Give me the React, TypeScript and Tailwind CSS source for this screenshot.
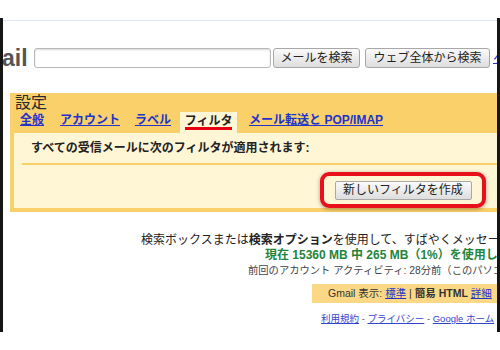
import React from "react";

export default function App() {
  return (
    <div className="w-[500px] h-[350px] bg-white overflow-hidden font-['Liberation_Sans','Noto_Sans_CJK_JP',sans-serif] text-[#222]">
      <div className="pt-[18px]">
        <div className="h-[314px] border-l-[3px] border-r-[3px] border-[#151515] overflow-hidden">
          <div className="mt-[2px] border-t border-[#dfe6f5]" />
          {/* search row */}
          <div className="mt-[27px] flex items-center h-[20px] whitespace-nowrap">
            <span className="shrink-0 text-[23px] font-bold text-[#555] leading-none w-[32px] -ml-[1px]">ail</span>
            <div className="shrink-0 w-[237px] h-[20px] border border-[#b8b8b8] rounded-[3px] shadow-[inset_0_1px_2px_rgba(0,0,0,0.15)] bg-white" />
            <button className="shrink-0 ml-[2px] w-[87px] h-[20px] border border-[#a8a8a8] rounded-[3px] bg-gradient-to-b from-[#fafafa] to-[#dedede] text-[12px] leading-none text-[#222]">
              メールを検索
            </button>
            <button className="shrink-0 ml-[5px] w-[125px] h-[20px] border border-[#a8a8a8] rounded-[3px] bg-gradient-to-b from-[#fafafa] to-[#dedede] text-[12px] leading-none text-[#222]">
              ウェブ全体から検索
            </button>
            <span className="shrink-0 ml-[3px] text-[13px] text-[#2233cc] underline">ヘ</span>
          </div>
          {/* settings box */}
          <div className="mt-[25px] ml-[7px] w-[520px] h-[119px] bg-[#f9d06a] flex flex-col">
            <div className="pl-[5px] pt-[1px] h-[19px] text-[16px] leading-[18px] text-[#2a2a2a]">設定</div>
            <div className="flex items-end h-[21px] text-[12px] font-bold whitespace-nowrap">
              <span className="ml-[10px] mb-[4px] text-[#2233cc] underline">全般</span>
              <span className="ml-[16px] mb-[4px] text-[#2233cc] underline">アカウント</span>
              <span className="ml-[15px] mb-[4px] text-[#2233cc] underline">ラベル</span>
              <span className="ml-[9px] h-[21px] w-[57px] bg-[#fff6d6] flex justify-center pt-[2px]">
                <span className="h-[16px] text-[#222] border-b-[3px] border-[#e60012] leading-[14px]">フィルタ</span>
              </span>
              <span className="ml-[12px] mb-[4px] text-[#2233cc] underline">メール転送と POP/IMAP</span>
            </div>
            <div className="ml-[4px] h-[75px] bg-[#fff6d6] flex flex-col">
              <div className="pl-[17px] pt-[7px] h-[30px] text-[12px] font-bold leading-[16px] whitespace-nowrap text-[#222]">
                すべての受信メールに次のフィルタが適用されます:
              </div>
              <div className="ml-[8px] h-[2px] bg-[#f9d06a]" />
              <div className="pl-[306px] pt-[7px]">
                <div className="w-[166px] h-[36px] border-[4px] border-[#e8101a] rounded-[9px] flex items-center justify-center shadow-[0_1px_4px_rgba(0,0,0,0.35)]">
                  <button className="w-[137px] h-[19px] border border-[#a8a8a8] rounded-[2px] bg-gradient-to-b from-[#fafafa] to-[#dedede] text-[12px] leading-none text-[#222]">
                    新しいフィルタを作成
                  </button>
                </div>
              </div>
            </div>
          </div>
          {/* info lines */}
          <div className="mt-[21px] whitespace-nowrap">
            <div className="pl-[138px] text-[12px] leading-[15px] text-[#222]">
              検索ボックスまたは<b>検索オプション</b>を使用して、すばやくメッセー
            </div>
            <div className="pl-[262px] text-[12px] leading-[15px] font-bold text-[#24843a]">
              現在 15360 MB 中 265 MB（1%）を使用し
            </div>
            <div className="pl-[245px] text-[10.3px] leading-[15px] text-[#444]">
              前回のアカウント アクティビティ: 28分前（このパソコ
            </div>
            <div className="mt-[6px] ml-[309px] w-[200px] h-[19px] bg-[#fbd886] text-[10.5px] leading-[19px] pl-[16px] text-[#333]">
              Gmail 表示: <span className="text-[#2233cc] underline">標準</span> | <b>簡易 HTML</b> <span className="text-[#2233cc] underline">詳細</span>
            </div>
            <div className="mt-[9px] pl-[318px] text-[9.5px] leading-[14px] text-[#555]">
              <span className="text-[#3344cc] underline">利用規約</span> - <span className="text-[#3344cc] underline">プライバシー</span> - <span className="text-[#3344cc] underline">Google ホーム</span>
            </div>
          </div>
        </div>
      </div>
    </div>
  );
}
